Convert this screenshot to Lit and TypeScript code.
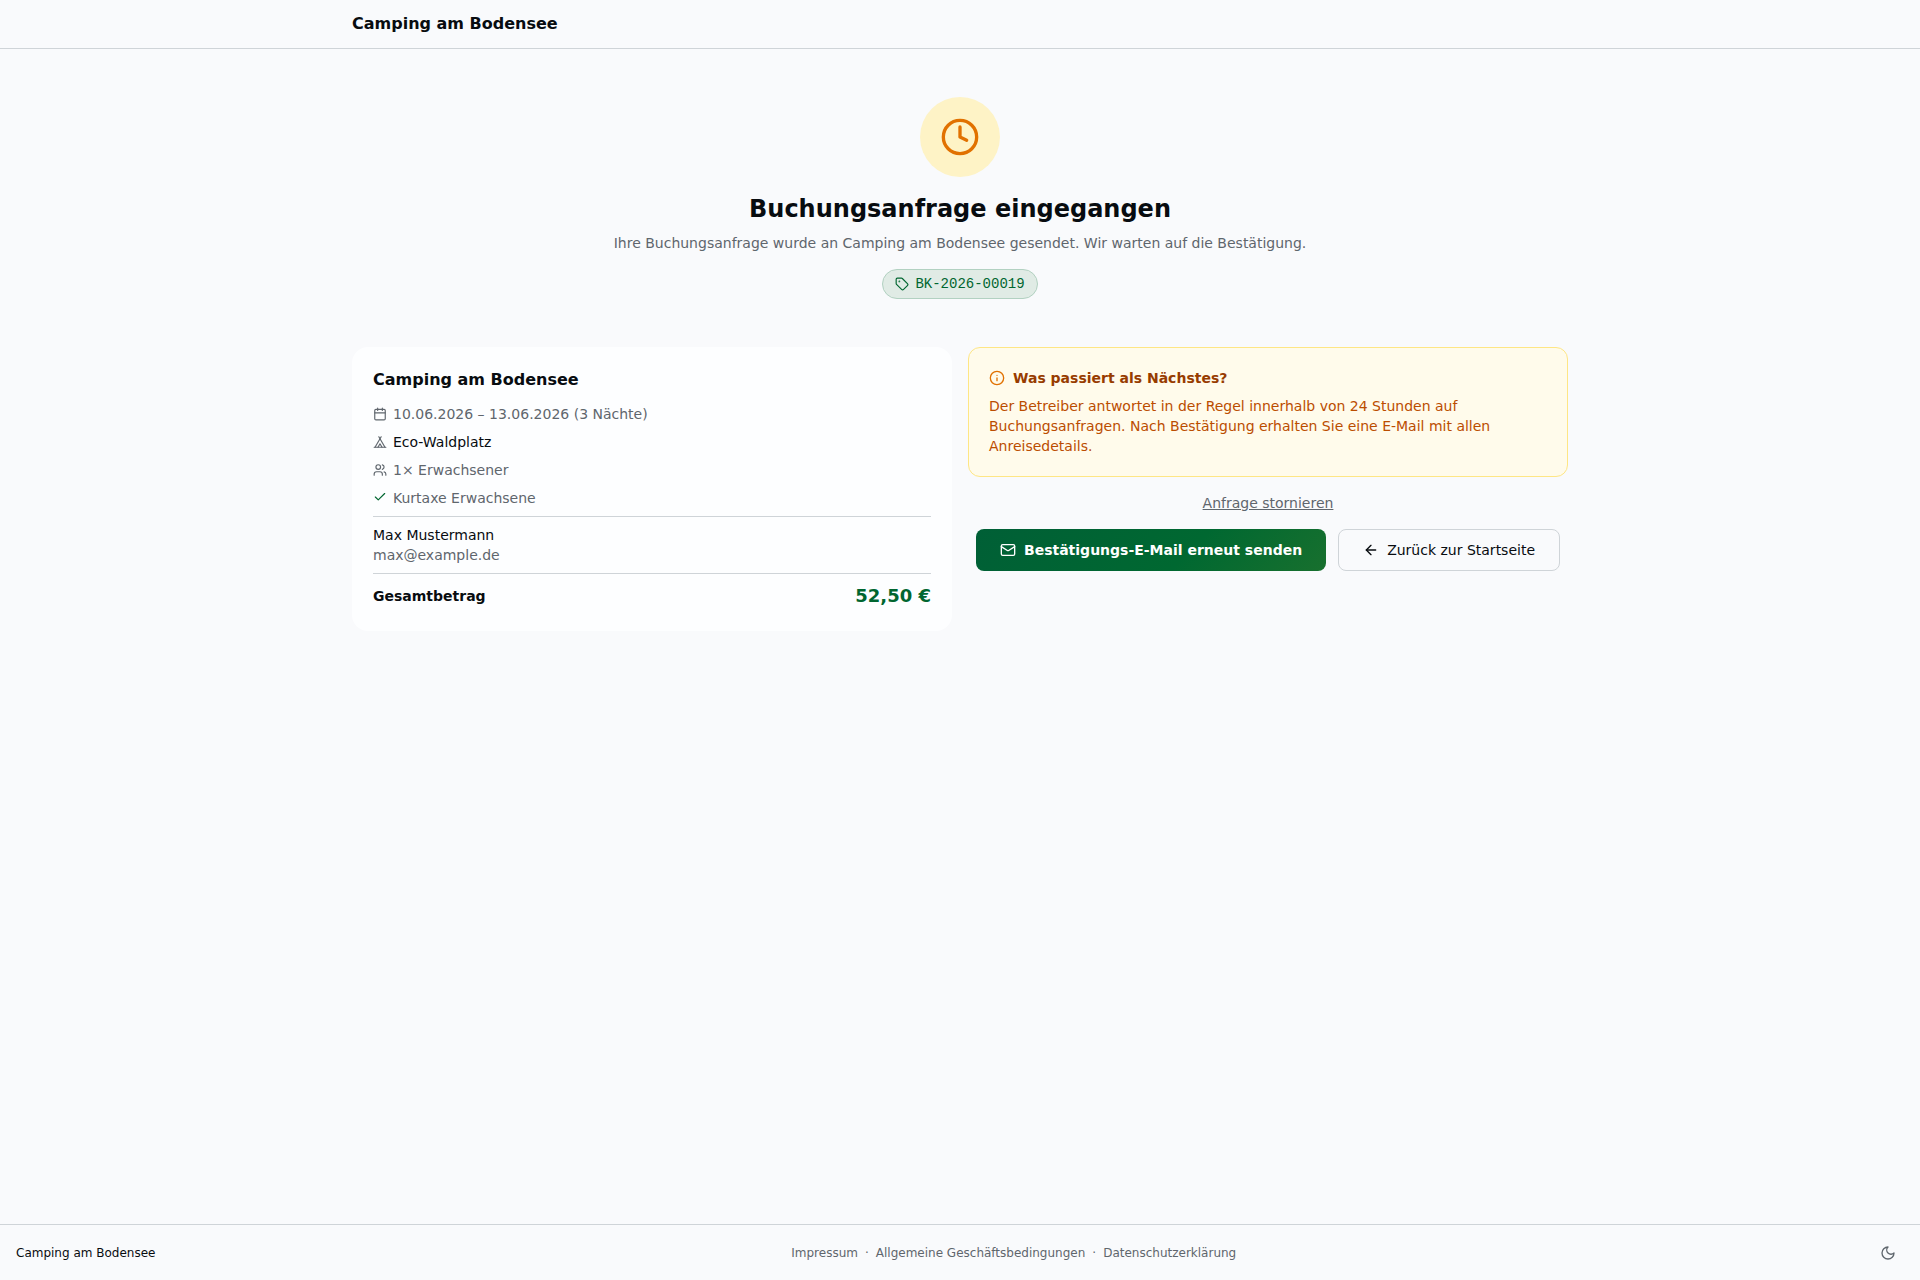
import { LitElement, html, css, svg } from "lit";
import { customElement, property } from "lit/decorators.js";

const icons: Record<string, unknown> = {
  clock: svg`<circle cx="12" cy="12" r="10"/><path d="M12 6v6l4 2"/>`,
  tag: svg`<path d="M12.586 2.586A2 2 0 0 0 11.172 2H4a2 2 0 0 0-2 2v7.172a2 2 0 0 0 .586 1.414l8.704 8.704a2.426 2.426 0 0 0 3.42 0l6.58-6.58a2.426 2.426 0 0 0 0-3.42z"/><circle cx="7.5" cy="7.5" r=".5" fill="currentColor"/>`,
  calendar: svg`<path d="M8 2v4M16 2v4"/><rect width="18" height="18" x="3" y="4" rx="2"/><path d="M3 10h18"/>`,
  tent: svg`<path d="M3.5 21 14 3"/><path d="M20.5 21 10 3"/><path d="M15.5 21 12 15l-3.5 6"/><path d="M2 21h20"/>`,
  users: svg`<path d="M16 21v-2a4 4 0 0 0-4-4H6a4 4 0 0 0-4 4v2"/><path d="M16 3.128a4 4 0 0 1 0 7.744"/><path d="M22 21v-2a4 4 0 0 0-3-3.87"/><circle cx="9" cy="7" r="4"/>`,
  check: svg`<path d="M20 6 9 17l-5-5"/>`,
  info: svg`<circle cx="12" cy="12" r="10"/><path d="M12 16v-4"/><path d="M12 8h.01"/>`,
  mail: svg`<path d="m22 7-8.991 5.727a2 2 0 0 1-2.009 0L2 7"/><rect x="2" y="4" width="20" height="16" rx="2"/>`,
  arrowLeft: svg`<path d="m12 19-7-7 7-7"/><path d="M19 12H5"/>`,
  moon: svg`<path d="M12 3a6 6 0 0 0 9 9 9 9 0 1 1-9-9Z"/>`,
};

@customElement("line-icon")
class LineIcon extends LitElement {
  @property() name = "";

  static styles = css`
    :host {
      display: block;
      flex: none;
      width: 16px;
      height: 16px;
    }
    .glyph {
      display: block;
      width: 100%;
      height: 100%;
      fill: none;
      stroke: currentColor;
      stroke-width: 2;
      stroke-linecap: round;
      stroke-linejoin: round;
    }
  `;

  render() {
    return html`<svg class="glyph" viewBox="0 0 24 24" aria-hidden="true">${icons[this.name]}</svg>`;
  }
}

@customElement("app-root")
class AppRoot extends LitElement {
  static styles = css`
    :host {
      --bg: #f9fafc;
      --card: #fdfeff;
      --text: #080c10;
      --muted: #5f666d;
      --line: #cfd4d8;
      --green: #006630;
      display: flex;
      flex-direction: column;
      min-height: 100vh;
      background: var(--bg);
      color: var(--text);
      font: 14px/20px "DejaVu Sans", sans-serif;
    }
    * {
      box-sizing: border-box;
    }
    h1, h2, p, ul {
      margin: 0;
      padding: 0;
    }
    ul {
      list-style: none;
    }
    button {
      font: inherit;
      cursor: pointer;
    }
    a {
      color: inherit;
      text-decoration: none;
    }
    .topbar {
      border-bottom: 1px solid var(--line);
    }
    .container {
      width: 100%;
      max-width: 1280px;
      margin: 0 auto;
      padding: 0 32px;
    }
    .brand {
      display: block;
      width: max-content;
      padding: 12px 0;
      font-size: 16px;
      line-height: 24px;
      font-weight: 700;
    }
    main {
      flex: 1;
    }
    .hero {
      display: flex;
      flex-direction: column;
      align-items: center;
      padding: 48px 0;
      text-align: center;
    }
    .status {
      display: grid;
      place-items: center;
      width: 80px;
      height: 80px;
      border-radius: 50%;
      background: #fef3c6;
      color: #e17100;
    }
    .status line-icon {
      width: 40px;
      height: 40px;
    }
    .title {
      margin-top: 16px;
      font-size: 24px;
      line-height: 32px;
      font-weight: 700;
    }
    .lead {
      margin-top: 8px;
      color: var(--muted);
    }
    .badge {
      display: flex;
      align-items: center;
      gap: 6px;
      margin-top: 16px;
      padding: 4px 12px;
      border: 1px solid #b2d1c1;
      border-radius: 16px;
      background: #e0ebe5;
      color: var(--green);
      font-family: "Liberation Mono", monospace;
    }
    .small line-icon {
      width: 14px;
      height: 14px;
    }
    .columns {
      display: grid;
      grid-template-columns: repeat(auto-fit, minmax(min(100%, 440px), 1fr));
      align-items: start;
      gap: 16px;
      padding-bottom: 48px;
    }
    .card {
      padding: 21px;
      border-radius: 16px;
      background: var(--card);
    }
    .card-title {
      font-size: 16px;
      line-height: 24px;
      font-weight: 700;
    }
    .details {
      display: grid;
      gap: 8px;
      margin-top: 12px;
      color: var(--muted);
    }
    .detail {
      display: flex;
      align-items: center;
      gap: 6px;
    }
    .extra {
      align-items: flex-start;
    }
    .strong {
      color: var(--text);
    }
    .check {
      margin-top: 2px;
      color: var(--green);
    }
    .section {
      margin-top: 8px;
      padding-top: 8px;
      border-top: 1px solid var(--line);
    }
    .email {
      color: var(--muted);
    }
    .total {
      display: flex;
      align-items: center;
      justify-content: space-between;
      font-weight: 700;
    }
    .amount {
      font-size: 18px;
      line-height: 28px;
      color: var(--green);
    }
    .side {
      display: flex;
      flex-direction: column;
      gap: 16px;
    }
    .notice {
      padding: 20px;
      border: 1px solid #fee685;
      border-radius: 12px;
      background: #fffbeb;
      color: #bb4d00;
    }
    .notice-title {
      display: flex;
      align-items: center;
      gap: 8px;
      margin-bottom: 8px;
      font-size: 14px;
      font-weight: 700;
      color: #973c00;
    }
    .notice-title line-icon {
      color: #e17100;
    }
    .cancel {
      align-self: center;
      padding: 0;
      border: 0;
      background: none;
      color: var(--muted);
      text-decoration: underline;
    }
    .actions {
      display: flex;
      flex-wrap: wrap;
      justify-content: center;
      gap: 12px;
    }
    .button {
      display: flex;
      align-items: center;
      gap: 8px;
      padding: 10px 24px;
      border: 1px solid var(--line);
      border-radius: 8px;
      background: var(--bg);
    }
    .primary {
      padding: 11px 24px;
      border: 0;
      background: linear-gradient(135deg, #005f36 0%, #006831 60%, #18702e 100%);
      color: #fff;
      font-weight: 700;
    }
    .footer {
      display: flex;
      align-items: center;
      justify-content: space-between;
      min-height: 56px;
      padding: 0 16px;
      border-top: 1px solid var(--line);
      font-size: 12px;
      line-height: 16px;
    }
    .legal {
      display: flex;
      flex-wrap: wrap;
      gap: 7px;
      color: var(--muted);
    }
    .theme {
      display: grid;
      place-items: center;
      width: 32px;
      height: 32px;
      padding: 0;
      border: 0;
      background: none;
      color: var(--muted);
    }
  `;

  render() {
    return html`
      <header class="topbar">
        <div class="container"><a class="brand" href="#">Camping am Bodensee</a></div>
      </header>
      <main class="container">
        <section class="hero">
          <div class="status"><line-icon name="clock"></line-icon></div>
          <h1 class="title">Buchungsanfrage eingegangen</h1>
          <p class="lead">Ihre Buchungsanfrage wurde an Camping am Bodensee gesendet. Wir warten auf die Bestätigung.</p>
          <div class="badge small"><line-icon name="tag"></line-icon><span>BK-2026-00019</span></div>
        </section>
        <div class="columns">
          <section class="card">
            <h2 class="card-title">Camping am Bodensee</h2>
            <ul class="details small">
              <li class="detail"><line-icon name="calendar"></line-icon><span>10.06.2026 – 13.06.2026 (3 Nächte)</span></li>
              <li class="detail"><line-icon name="tent"></line-icon><span class="strong">Eco-Waldplatz</span></li>
              <li class="detail"><line-icon name="users"></line-icon><span>1× Erwachsener</span></li>
              <li class="detail extra"><line-icon class="check" name="check"></line-icon><span>Kurtaxe Erwachsene</span></li>
            </ul>
            <div class="section">
              <p>Max Mustermann</p>
              <p class="email">max@example.de</p>
            </div>
            <div class="section total"><span>Gesamtbetrag</span><span class="amount">52,50 €</span></div>
          </section>
          <div class="side">
            <section class="notice">
              <h2 class="notice-title"><line-icon name="info"></line-icon>Was passiert als Nächstes?</h2>
              <p>Der Betreiber antwortet in der Regel innerhalb von 24 Stunden auf Buchungsanfragen. Nach Bestätigung erhalten Sie eine E-Mail mit allen Anreisedetails.</p>
            </section>
            <button class="cancel" type="button">Anfrage stornieren</button>
            <div class="actions">
              <button class="button primary" type="button"><line-icon name="mail"></line-icon>Bestätigungs-E-Mail erneut senden</button>
              <a class="button" href="#"><line-icon name="arrowLeft"></line-icon>Zurück zur Startseite</a>
            </div>
          </div>
        </div>
      </main>
      <footer class="footer">
        <span>Camping am Bodensee</span>
        <nav class="legal">
          <a href="#">Impressum</a><span>·</span><a href="#">Allgemeine Geschäftsbedingungen</a><span>·</span><a href="#">Datenschutzerklärung</a>
        </nav>
        <button class="theme" type="button" aria-label="Dunkles Design"><line-icon name="moon"></line-icon></button>
      </footer>
    `;
  }
}
